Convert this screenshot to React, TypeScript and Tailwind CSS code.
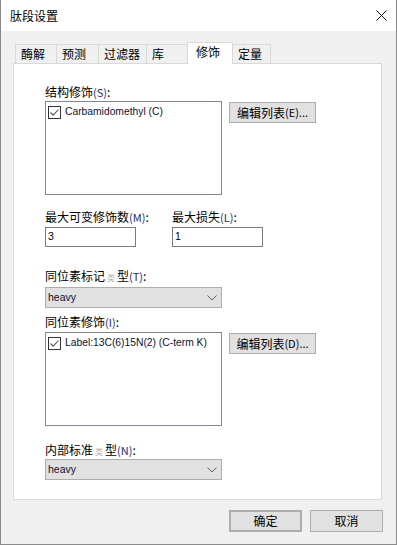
import React from "react"

const font = { fontFamily: '"Noto Sans CJK SC", "Liberation Sans", sans-serif' }
const latin = { fontFamily: '"Liberation Sans", "Noto Sans CJK SC", sans-serif' }

const tabs = [
  { label: "酶解", w: "w-[42px]" },
  { label: "预测", w: "w-[43px]" },
  { label: "过滤器", w: "w-[49px]" },
  { label: "库", w: "w-[42px]" },
  { label: "修饰", w: "w-[46px]", active: true },
  { label: "定量", w: "w-[39px]" },
]

function Lei() {
  // the glyph renders faded in the original
  return <span className="inline-block w-[12px] text-center text-[8px] text-[#b0b0b0]">类</span>
}

function Label({ children, k }: { children: React.ReactNode; k: string }) {
  return (
    <div className="h-[16px] text-[12px] leading-[16px] text-black">
      {children}
      <span className="text-[11px] text-[#1e2a78]">({k})</span>:
    </div>
  )
}

function Check() {
  return (
    <span className="flex size-[13px] shrink-0 items-center justify-center border border-[#333] bg-white">
      <svg width="11" height="11" viewBox="0 0 11 11" aria-hidden>
        <path d="M1.5 5.5 L4.2 8.2 L9.5 2.5" fill="none" stroke="#555" strokeWidth="1.1" />
      </svg>
    </span>
  )
}

function ListBox({ item }: { item: string }) {
  return (
    <div className="h-[94px] w-[177px] border border-[#828790] bg-white pl-[2px] pt-[3px]">
      <div className="flex items-center gap-[4px]">
        <Check />
        <span style={latin} className="text-[10.3px] leading-[14px] text-[#101030]">
          {item}
        </span>
      </div>
    </div>
  )
}

function Btn({ children, className = "" }: { children: React.ReactNode; className?: string }) {
  return (
    <button className={`flex items-center justify-center border border-[#adadad] bg-[#e1e1e1] text-[12px] text-black ${className}`}>
      {children}
    </button>
  )
}

function Select() {
  return (
    <div className="flex h-[21px] w-[177px] items-center justify-between border border-[#adadad] bg-[#e1e1e1] pl-[2px] pr-[4px]">
      <span style={latin} className="text-[10.5px] text-[#101030]">
        heavy
      </span>
      <svg width="10" height="6" viewBox="0 0 10 6" aria-hidden>
        <path d="M0.5 0.5 L5 5 L9.5 0.5" fill="none" stroke="#606060" strokeWidth="1" />
      </svg>
    </div>
  )
}

function Field({ value }: { value: string }) {
  return (
    <div style={latin} className="flex h-[20px] w-[91px] items-center border border-[#7a7a7a] bg-white pl-[2px] text-[10.5px] text-black">
      {value}
    </div>
  )
}

export default function App() {
  return (
    <div style={font} className="flex h-[545px] w-[397px] flex-col border-x border-b border-[#8a8a8a] bg-[#f0f0f0]">
      {/* Title bar */}
      <div className="flex h-[31px] shrink-0 items-center justify-between bg-white pl-[9px] pr-[9px]">
        <span className="text-[12px] text-black">肽段设置</span>
        <svg width="11" height="11" viewBox="0 0 11 11" aria-hidden>
          <path d="M0.5 0.5 L10.5 10.5 M10.5 0.5 L0.5 10.5" stroke="#111" strokeWidth="1" />
        </svg>
      </div>

      <div className="px-[12px] pt-[12px]">
        {/* Tabs */}
        <div className="flex h-[20px] items-end pl-[2px]">
          {tabs.map((t, i) =>
            t.active ? (
              <div
                key={t.label}
                className={`relative z-10 -mb-px -ml-px flex h-[22px] items-start border border-b-0 border-[#d9d9d9] bg-white pl-[8px] pt-[1px] text-[12px] leading-[16px] ${t.w}`}
              >
                {t.label}
              </div>
            ) : (
              <div
                key={t.label}
                className={`flex h-[19px] items-center border border-b-0 border-[#d9d9d9] bg-[#f0f0f0] pl-[5px] text-[12px] leading-[16px] ${i > 0 ? "-ml-px" : ""} ${t.w}`}
              >
                {t.label}
              </div>
            ),
          )}
        </div>

        {/* Panel */}
        <div className="h-[437px] w-[369px] border border-[#d9d9d9] bg-white pl-[31px] pt-[20px]">
          <Label k="S">结构修饰</Label>
          <div className="mt-px flex gap-[7px]">
            <ListBox item="Carbamidomethyl (C)" />
            <Btn className="mt-px h-[21px] w-[87px]">
              编辑列表<span className="text-[11px]">(E)...</span>
            </Btn>
          </div>

          <div className="mt-[14px] flex">
            <div className="w-[127px]">
              <Label k="M">最大可变修饰数</Label>
              <div className="mt-[2px]">
                <Field value="3" />
              </div>
            </div>
            <div>
              <Label k="L">最大损失</Label>
              <div className="mt-[2px]">
                <Field value="1" />
              </div>
            </div>
          </div>

          <div className="mt-[21px]">
            <Label k="T">
              同位素标记<Lei />型
            </Label>
          </div>
          <div className="mt-[3px]">
            <Select />
          </div>

          <div className="mt-[6px]">
            <Label k="I">同位素修饰</Label>
          </div>
          <div className="mt-[2px] flex gap-[7px]">
            <ListBox item="Label:13C(6)15N(2) (C-term K)" />
            <Btn className="mt-px h-[21px] w-[87px]">
              编辑列表<span className="text-[11px]">(D)...</span>
            </Btn>
          </div>

          <div className="mt-[16px]">
            <Label k="N">
              内部标准<Lei />型
            </Label>
          </div>
          <div className="mt-px">
            <Select />
          </div>
        </div>

        {/* Footer buttons */}
        <div className="mt-[10px] flex w-[370px] justify-end gap-[8px]">
          <Btn className="h-[22px] w-[73px] border-2 border-[#0078d7]">确定</Btn>
          <Btn className="h-[22px] w-[73px]">取消</Btn>
        </div>
      </div>
    </div>
  )
}
